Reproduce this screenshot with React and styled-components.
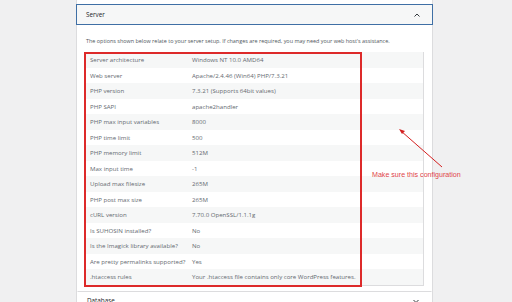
import styled, { createGlobalStyle } from "styled-components";

const GlobalStyle = createGlobalStyle`
    html, body {
        margin: 0;
        padding: 0;
        background: #f0f0f1;
    }
    body {
        font-family: "Open Sans", "Noto Sans", sans-serif;
        color: #50575e;
    }
`;

const Page = styled.div`
    width: 512px;
    height: 302px;
    overflow: hidden;
    background: #f0f0f1;
`;

const Panel = styled.div`
    position: relative;
    margin-left: 76px;
    width: 355px;
    min-height: 320px;
    padding-top: 4px;
    background: #fff;
    border-left: 1px solid #dcdcde;
    border-right: 1px solid #dcdcde;
`;

const SectionHeader = styled.div`
    display: flex;
    justify-content: space-between;
    align-items: center;
    box-sizing: border-box;
    height: ${(p) => (p.$open ? "21px" : "20px")};
    margin-left: ${(p) => (p.$open ? "-1px" : "0")};
    margin-right: ${(p) => (p.$open ? "-1px" : "0")};
    padding: 0 10px 0 9px;
    background: ${(p) => (p.$open ? "#f6f7f7" : "#fff")};
    border: 1px solid ${(p) => (p.$open ? "#3f6fa5" : "transparent")};
    border-top: ${(p) => (p.$open ? "1px solid #3f6fa5" : "1px solid #dcdcde")};
    font-size: 6.3px;
    color: #1d2327;
`;

const Chevron = styled.svg`
    width: 8px;
    height: 8px;
    margin-right: 1px;
`;

const Content = styled.div`
    padding: 11px 8px 0 7px;
`;

const Description = styled.p`
    margin: 0 0 6px 2px;
    font-size: 5.45px;
    line-height: 10px;
    white-space: nowrap;
    color: #50575e;
`;

const Table = styled.div`
    border: 1px solid #dcdcde;
    border-top: none;
`;

const Row = styled.div`
    display: grid;
    grid-template-columns: 102px 1fr;
    align-items: center;
    height: 15.5px;
    padding-left: 5px;
    background: ${(p) => (p.$odd ? "#f6f7f7" : "#fff")};
    font-size: 6.1px;
    color: #646970;
`;

const Cell = styled.span`
    white-space: nowrap;
`;

const Highlight = styled.div`
    position: absolute;
    left: 7px;
    top: 52px;
    width: 274px;
    height: 231px;
    border: 2px solid #dd2a2a;
    pointer-events: none;
`;

const Annotation = styled.div`
    position: absolute;
    left: 287px;
    top: 126px;
    width: 100px;
    height: 60px;
`;

const Note = styled.span`
    position: absolute;
    left: 8px;
    top: 45px;
    white-space: nowrap;
    font-family: "Liberation Sans", Arial, sans-serif;
    font-size: 7.1px;
    color: #e0454a;
`;

const NextSection = styled.div`
    margin-top: 5px;
`;

const rows = [
    ["Server architecture", "Windows NT 10.0 AMD64"],
    ["Web server", "Apache/2.4.46 (Win64) PHP/7.3.21"],
    ["PHP version", "7.3.21 (Supports 64bit values)"],
    ["PHP SAPI", "apache2handler"],
    ["PHP max input variables", "8000"],
    ["PHP time limit", "500"],
    ["PHP memory limit", "512M"],
    ["Max input time", "-1"],
    ["Upload max filesize", "265M"],
    ["PHP post max size", "265M"],
    ["cURL version", "7.70.0 OpenSSL/1.1.1g"],
    ["Is SUHOSIN installed?", "No"],
    ["Is the Imagick library available?", "No"],
    ["Are pretty permalinks supported?", "Yes"],
    [".htaccess rules", "Your .htaccess file contains only core WordPress features."],
];

function ChevronIcon({ up }) {
    return (
        <Chevron viewBox="0 0 8 8">
            <path
                d={up ? "M1.5 5.5 L4 3 L6.5 5.5" : "M1.5 3 L4 5.5 L6.5 3"}
                fill="none"
                stroke="#1d2327"
                strokeWidth="0.9"
            />
        </Chevron>
    );
}

function App() {
    return (
        <>
            <GlobalStyle />
            <Page>
                <Panel>
                    <SectionHeader $open>
                        <span>Server</span>
                        <ChevronIcon up />
                    </SectionHeader>
                    <Content>
                        <Description>
                            The options shown below relate to your server setup. If changes are
                            required, you may need your web host's assistance.
                        </Description>
                        <Table>
                            {rows.map(([label, value], i) => (
                                <Row key={label} $odd={i % 2 === 0}>
                                    <Cell>{label}</Cell>
                                    <Cell>{value}</Cell>
                                </Row>
                            ))}
                        </Table>
                    </Content>
                    <NextSection>
                        <SectionHeader>
                            <span>Database</span>
                            <ChevronIcon />
                        </SectionHeader>
                    </NextSection>
                    <Highlight />
                    <Annotation>
                        <svg width="100" height="60" viewBox="0 0 100 60">
                            <line x1="78" y1="41" x2="37" y2="5" stroke="#d42020" strokeWidth="1" />
                            <path d="M35 3 L41 5 L38 8 Z" fill="#d42020" />
                        </svg>
                        <Note>Make sure this configuration</Note>
                    </Annotation>
                </Panel>
            </Page>
        </>
    );
}

export default App;
